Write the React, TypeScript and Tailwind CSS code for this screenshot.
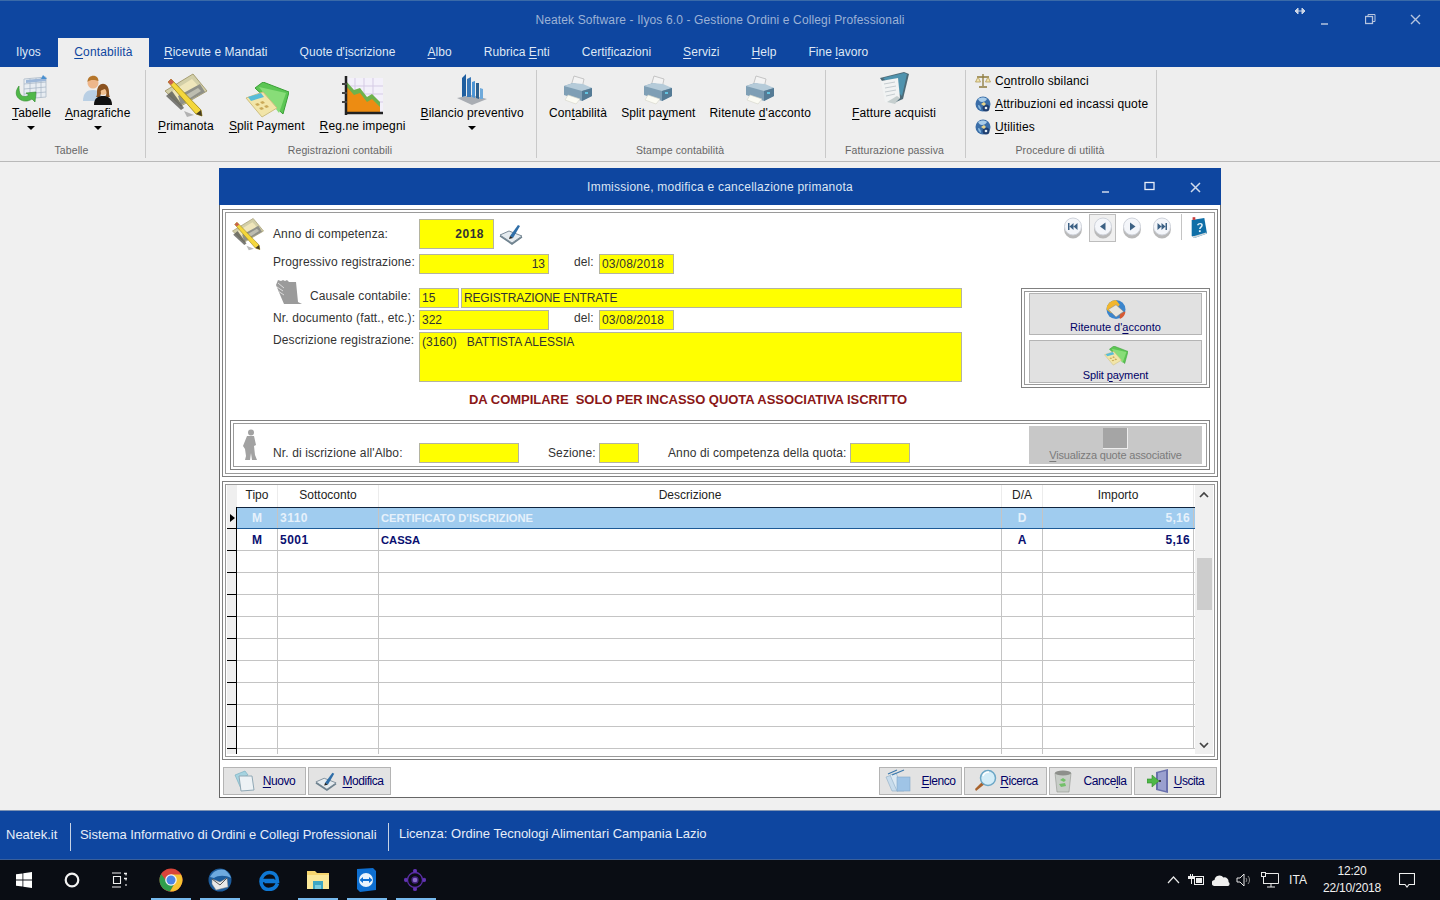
import React from "react";

function L({ t }: { t: string }) {
  const i = t.indexOf("&");
  if (i < 0) return <>{t}</>;
  return (
    <>
      {t.slice(0, i)}
      <u className="underline underline-offset-2">{t[i + 1]}</u>
      {t.slice(i + 2)}
    </>
  );
}

const IconTabelle = () => (
  <svg width="34" height="30" viewBox="0 0 34 30">
    <path d="M10 4l22 -2v20l-22 2z" fill="#e8edf2" stroke="#b9c4d0" />
    <path d="M10 9l22-2M10 14l22-2M10 19l22-2M16 3.500v20M22 3v20M27 2.500v20" stroke="#a9b8c8" strokeWidth="0.8" />
    <path d="M12 5l20-2v3l-20 2z" fill="#9db7d8" />
    <path d="M29 0l4 4h-6z" fill="#4a90d0" />
    <path d="M5 11c-4 5-4 11 2 14 4 2 8 1 11-1l3 3 1-10-10 1 3 2c-3 2-6 2-8 0-2-2-2-6-2-9z" fill="#4fb848" stroke="#2f8a2c" strokeWidth="0.6" />
  </svg>
);
const IconAnagrafiche = () => (
  <svg width="30" height="30" viewBox="0 0 30 30">
    <circle cx="10" cy="8" r="5.500" fill="#eeb68a" />
    <path d="M4.500 7c0-8 11-8 11-1-3-1-8-2-11 1z" fill="#b5762b" />
    <path d="M0 26c0-8 4-11 10-11s9 3 9 11z" fill="#b9cfe4" />
    <circle cx="20" cy="15" r="5" fill="#f0c090" />
    <path d="M14 17c0-11 12-11 12 0 0 4 1 5 1 5h-5c2-3 2-6 0-8-3 1-5 1-4 4l-1 4h-4c1-1 1-3 1-5z" fill="#8a5220" />
    <path d="M11 30c0-7 4-9 9-9s9 2 9 9z" fill="#111111" />
  </svg>
);
const PrimanotaArt = () => (
  <>
    <path d="M3 19L31 2l14 17-26 15z" fill="#d3cfa8" stroke="#a79f75" />
    <path d="M9 20L30 7l11 12-21 12z" fill="#efe6bb" />
    <path d="M16 24l22-12 5 8-24 13z" fill="#8f9088" />
    <path d="M22 24l14-8 3 3-14 9z" fill="#bdbdb0" />
    <path d="M4 24l15 14 3-2-12-17z" fill="#5d5d58" opacity="0.8" />
    <path d="M6 10l3-3 30 31 1 6-6-2z" fill="#f4d73c" stroke="#9b8417" strokeWidth="0.8" />
    <path d="M6 10l3-3 3 3-3 3z" fill="#c9604f" />
    <path d="M34 42l6 2-1-6z" fill="#473d22" />
    <path d="M22 39l10 4-7 2z" fill="#888888" opacity="0.6" />
  </>
);
const IconPrimanota = () => (
  <svg width="48" height="46" viewBox="0 0 48 46"><PrimanotaArt /></svg>
);
const IconPrimanota2 = () => (
  <svg width="36" height="34" viewBox="0 0 48 46" className="shrink-0"><PrimanotaArt /></svg>
);
const IconSplit = ({ s = 44 }: { s?: number }) => (
  <svg width={s} height={(s * 36) / 44} viewBox="0 0 44 36">
    <path d="M10 6l8-6 26 10-6 22z" fill="#5cc654" stroke="#3a9f35" />
    <path d="M14 5l27 6-7 20z" fill="#88dd78" />
    <path d="M1 16l17-6 14 16-15 9z" fill="#f2e5a8" stroke="#cdbf80" />
    <path d="M3 15l13-4 3 4-13 4z" fill="#58bcd8" />
    <path d="M10 22l3-1 2 2-3 1zM15 20l3-1 2 2-3 1zM14 26l3-1 2 2-3 1zM19 24l3-1 2 2-3 1z" fill="#c9a958" />
  </svg>
);
const IconImpegni = () => (
  <svg width="44" height="42" viewBox="0 0 44 42">
    <rect x="5" y="2" width="37" height="34" fill="#f3f0fa" />
    <path d="M5 10h37M5 18h37M5 26h37M14 2v34M23 2v34M32 2v34" stroke="#d5cbe5" />
    <path d="M5 8l8 9 6-2 7 9 5-3 8 8v7H5z" fill="#ed8c12" />
    <path d="M5 5l8 9 6-2 7 9 5-3 8 8v5l-8-8-5 3-7-9-6 2-8-9z" fill="#6eb24c" />
    <path d="M5 0v39M5 37h37" stroke="#222222" strokeWidth="2.500" />
    <path d="M1 8h5M1 17h5M1 26h5" stroke="#444444" strokeWidth="2" />
  </svg>
);
const IconBilancio = () => (
  <svg width="30" height="32" viewBox="0 0 30 32">
    <path d="M0 25l15-3 15 4-15 6z" fill="#a9adb3" />
    <path d="M5 5l4-4v22l-4 1z" fill="#1f5e9f" />
    <path d="M10 6l4-2v20h-4z" fill="#3878b8" />
    <path d="M15 9l3-1v17l-3-1z" fill="#4c94d4" />
    <path d="M19 10l3 0v16l-3-1z" fill="#2b5f8e" />
    <path d="M23 15l3 1v10l-3 0z" fill="#6faadb" />
  </svg>
);
const IconPrinter = () => (
  <svg width="30" height="30" viewBox="0 0 30 30">
    <path d="M11 1l10 3-2 9-11-2z" fill="#f3f3f3" stroke="#c4c4c4" />
    <path d="M1 11l9-3 19 5v8l-10 5-18-6z" fill="#7f9fb5" />
    <path d="M1 11l18 5 10-3-9-4-10-1z" fill="#b5cbd9" />
    <path d="M19 16v10l10-5v-8z" fill="#557b95" />
    <path d="M5 20l12 4-4 5-11-4z" fill="#fbfbf3" stroke="#d4d4c8" strokeWidth="0.6" />
    <rect x="22" y="17" width="3" height="2" fill="#63c3e0" />
  </svg>
);
const IconFatture = () => (
  <svg width="34" height="34" viewBox="0 0 34 34">
    <path d="M3 7l24-6 5 2-6 25-7 3z" fill="#4d6a77" />
    <path d="M6 7l21-5 3 1-5 22z" fill="#4f93ae" />
    <path d="M4 10l17-3 2 20-6 6-9-2z" fill="#f1f3f3" />
    <path d="M7 13l11-2M8 17l11-2M8 21l11-2M9 25l9-2" stroke="#c5ccd0" />
    <path d="M20 25l3 2-5 6-8-2z" fill="#99aaaa" opacity="0.5" />
  </svg>
);
const IconScales = () => (
  <svg width="16" height="16" viewBox="0 0 16 16">
    <path d="M8 1v12M4 14h8M2 4h12" stroke="#8d7a3c" strokeWidth="1.300" />
    <path d="M0.500 9L3 4l2.500 5zM10.500 9L13 4l2.500 5z" fill="#f2e4ae" stroke="#a9924a" strokeWidth="0.7" />
  </svg>
);
const IconDisc = () => (
  <svg width="16" height="16" viewBox="0 0 16 16">
    <circle cx="8" cy="8" r="7.500" fill="#3b6ea8" />
    <path d="M3 3c3-2 7-2 9 0-1 2-3 3-5 3S4 5 3 3z" fill="#a9cdea" />
    <path d="M3 9c2 0 3 2 3 5-2-1-3-3-3-5z" fill="#88b8dd" />
    <circle cx="11" cy="12" r="3.500" fill="#1f3f70" />
    <circle cx="11" cy="12" r="1.300" fill="#e5eef5" />
    <path d="M6 8l3-2 2 2-2 2z" fill="#e8d48a" />
  </svg>
);
const IconCheck = ({ s = 24 }: { s?: number }) => (
  <svg width={s} height={s} viewBox="0 0 24 24">
    <path d="M1 13l9-4 13 5-10 7z" fill="#e5ebef" stroke="#7d8d99" />
    <path d="M1 14l12 8 10-7" fill="none" stroke="#6b7f8c" strokeWidth="1.500" />
    <path d="M11 14l8-11 2 1-7 12z" fill="#2f6ea8" />
    <path d="M11 14l-1 3 4-1z" fill="#222222" />
  </svg>
);
const IconCausale = () => (
  <svg width="28" height="26" viewBox="0 0 28 26" fill="#9b9b9b">
    <path d="M3 1l3 1 2-1 2 1 2-1 2 2h7l2 20 4 2H9l-3-7-5-12z" />
    <path d="M3 4l6 5M2 8l6 4M3 12l6 4" stroke="#dcdcdc" strokeWidth="1" />
  </svg>
);
const IconPerson = () => (
  <svg width="14" height="32" viewBox="0 0 14 32" fill="#a2a2a2">
    <circle cx="8" cy="3.500" r="3" />
    <path d="M4 7h7l2 9-2 1 1 9 2 5H9l-1-7-1 7H2l1-4-1-7-2-3z" />
  </svg>
);
const IconRit = () => (
  <svg width="24" height="20" viewBox="0 0 24 20">
    <circle cx="12" cy="10" r="10" fill="#3b85cc" />
    <path d="M12 0a10 10 0 0 0-10 10l5 4 9-9z" fill="#f2b62c" />
    <path d="M16 20a10 10 0 0 0 6-8l-6 2z" fill="#d65a33" />
    <path d="M4 10l8-5 8 7-8 6z" fill="#e8e6dd" stroke="#888888" strokeWidth="0.6" />
  </svg>
);
const IconNuovo = () => (
  <svg width="22" height="22" viewBox="0 0 22 22">
    <path d="M1 5l10-4 3 4-8 4 2 12z" fill="#a5d3e0" stroke="#7bb2c3" strokeWidth="0.7" />
    <path d="M5 6h13l2 14-13 1z" fill="#edf2f5" stroke="#90a8b5" />
  </svg>
);
const IconElenco = () => (
  <svg width="28" height="24" viewBox="0 0 28 24">
    <path d="M1 8l6-2 6 16H7z" fill="#c8dcec" stroke="#8eadc4" strokeWidth="0.6" />
    <path d="M5 6l6-2 8 18h-7z" fill="#dce9f3" stroke="#8eadc4" strokeWidth="0.6" />
    <rect x="12" y="8" width="13" height="14" fill="#9fc4e6" stroke="#83a9c9" strokeWidth="0.6" />
    <path d="M3 5l9-4M7 6l12-5" stroke="#3b79ad" strokeWidth="1.200" />
  </svg>
);
const IconLente = () => (
  <svg width="24" height="24" viewBox="0 0 24 24">
    <path d="M3 22l-1-2 8-8 3 2z" fill="#a8622c" />
    <circle cx="15" cy="9" r="7.500" fill="#d4edf8" stroke="#6ca7c6" strokeWidth="1.500" />
    <path d="M10 7c1-3 4-4 6-4" stroke="#ffffff" strokeWidth="1.500" fill="none" />
  </svg>
);
const IconBin = () => (
  <svg width="18" height="24" viewBox="0 0 18 24">
    <path d="M1 4h16l-2 19H3z" fill="#c8cdc8" stroke="#90948f" strokeWidth="0.6" />
    <ellipse cx="9" cy="4" rx="8" ry="2.500" fill="#8d8f8b" />
    <path d="M6 11l3-2 3 2-2 2zM5 15l2 3 5-1-1-3z" fill="#73c06a" />
  </svg>
);
const IconUscita = () => (
  <svg width="24" height="24" viewBox="0 0 24 24">
    <path d="M9 3l12-3v24l-12-3z" fill="#6970ad" />
    <path d="M11 4l8-2v20l-8-2z" fill="#9aa0cf" />
    <circle cx="13" cy="12" r="1" fill="#222222" />
    <path d="M0 10h5V6l7 6-7 6v-4H0z" fill="#4fb848" stroke="#2f8a2c" strokeWidth="0.6" />
  </svg>
);
const NavBtn = ({ d }: { d: string }) => (
  <svg width="20" height="22" viewBox="0 0 20 22">
    <ellipse cx="10" cy="12" rx="9" ry="9.500" fill="#b9b9b9" />
    <circle cx="10" cy="9.500" r="8.500" fill="#f4f6fa" stroke="#d0d4dc" />
    <path d={d} fill="#3c6184" />
  </svg>
);
const IconHelp = () => (
  <svg className="mt-[3px]" width="18" height="22" viewBox="0 0 20 24">
    <path d="M3 3l14-2 3 17-14 5-3-2z" fill="#0f6fa8" />
    <path d="M3 21l3 2 14-5-1-1-13 4z" fill="#cfd8dc" />
    <rect x="4" y="0" width="3" height="3" fill="#c93b3b" />
    <path d="M9.500 9c1-2.500 5-2.500 5 0 0 2-2.500 2-2.500 4" stroke="#e8f4fb" strokeWidth="1.600" fill="none" />
    <rect x="11" y="14.500" width="2" height="2" fill="#e8f4fb" />
  </svg>
);

function Arrow() {
  return <span className="mt-[5px] w-0 h-0 border-l-[4px] border-r-[4px] border-t-[4px] border-l-transparent border-r-transparent border-t-black" />;
}

function RibbonItem({ icon, label, tall, arrow }: { icon: React.ReactNode; label: string; tall?: boolean; arrow?: boolean }) {
  return (
    <div className="flex flex-col items-center">
      <div className={`flex items-end justify-center ${tall ? "h-[48px]" : "h-[35px]"}`}>{icon}</div>
      <div className="h-[16px] leading-[16px] whitespace-nowrap text-[12px] tracking-[0.13px] text-black"><L t={label} /></div>
      {arrow && <Arrow />}
    </div>
  );
}

function Group({ title, w, children, pl, gap }: { title: string; w: string; children: React.ReactNode; pl: string; gap: string }) {
  return (
    <div className={`flex flex-col h-[88px] border-r border-[#c9c9c9] ${w}`}>
      <div className={`flex-1 flex ${pl} ${gap}`}>{children}</div>
      <div className="h-[15px] pr-[2px] text-center text-[10.500px] tracking-[0.1px] leading-[14px] text-[#666666]">{title}</div>
    </div>
  );
}

function Field({ children, w, h = "h-[20px]", cls = "" }: { children?: React.ReactNode; w: string; h?: string; cls?: string }) {
  return (
    <div className={`${w} ${h} bg-[#ffff00] border border-[#b4b4a0] px-[2px] text-[12px] leading-[19px] text-[#333333] whitespace-pre shrink-0 ${cls}`}>{children}</div>
  );
}

function Label({ children, w = "w-[146px]", cls = "" }: { children: React.ReactNode; w?: string; cls?: string }) {
  return <div className={`${w} text-[12px] tracking-[0.12px] leading-[14px] text-[#333333] whitespace-nowrap shrink-0 ${cls}`}>{children}</div>;
}

function GrayBtn({ icon, label, w = "w-[83px]", gap = "gap-[8px]" }: { icon: React.ReactNode; label: string; w?: string; gap?: string }) {
  return (
    <div className={`${w} h-[28px] bg-[#e3e3e3] border border-[#b4b4b4] flex items-center justify-center ${gap} text-[12px] tracking-[-0.45px] text-[#000066]`}>
      {icon}
      <span className="whitespace-nowrap"><L t={label} /></span>
    </div>
  );
}

function Cell({ w, cls = "", children }: { w: string; cls?: string; children?: React.ReactNode }) {
  return <div className={`${w} h-full shrink-0 border-r border-[#c4c4c4] px-[2px] truncate ${cls}`}>{children}</div>;
}

const menus = ["Ilyos", "&Contabilità", "&Ricevute e Mandati", "Quote d'&iscrizione", "&Albo", "Rubrica &Enti", "Certi&ficazioni", "&Servizi", "&Help", "Fine &lavoro"];

const rows: { tipo: string; conto: string; desc: string; da: string; imp: string }[] = [
  { tipo: "M", conto: "3110", desc: "CERTIFICATO D'ISCRIZIONE", da: "D", imp: "5,16" },
  { tipo: "M", conto: "5001", desc: "CASSA", da: "A", imp: "5,16" },
  ...Array.from({ length: 9 }, () => ({ tipo: "", conto: "", desc: "", da: "", imp: "" })),
];

export default function App() {
  return (
    <div className="w-[1440px] h-[900px] overflow-hidden flex flex-col bg-[#f0f0f0] font-['Liberation_Sans',Arial,sans-serif]">
      {/* Title bar */}
      <div className="h-[38px] shrink-0 bg-[#0e46a0] border-t border-[#3a6aa8] flex items-center relative">
        <div className="w-full text-center text-[12px] tracking-[0.13px] text-[#9cb2d6]">Neatek Software - Ilyos 6.0 - Gestione Ordini e Collegi Professionali</div>
        <div className="absolute right-0 top-0 h-full flex text-[#a9bbd8]">
          <svg className="absolute right-[134px] top-[6px]" width="12" height="8" viewBox="0 0 12 8"><path d="M1 4h10M1 4l3-3v6zM11 4L8 1v6z" fill="#cbd5e6" stroke="#cbd5e6" /></svg>
          <svg className="absolute right-[110px] top-[15px]" width="10" height="10" viewBox="0 0 10 10"><path d="M1 8h7" stroke="#b5c4de" strokeWidth="1.500" /></svg>
          <svg className="absolute right-[64px] top-[13px]" width="11" height="11" viewBox="0 0 11 11" fill="none" stroke="#b5c4de"><rect x="0.500" y="2.500" width="7" height="7" strokeWidth="1.300" /><path d="M3 2.500v-2h7v7H8" /></svg>
          <svg className="absolute right-[19px] top-[13px]" width="11" height="11" viewBox="0 0 11 11"><path d="M1 1l9 9M10 1l-9 9" stroke="#b5c4de" strokeWidth="1.400" /></svg>
        </div>
      </div>
      {/* Menu */}
      <div className="h-[29px] shrink-0 bg-[#0e46a0] flex text-[12px] tracking-[0.05px] text-[#dfe8f5]">
        {menus.map((m, i) =>
          i === 1 ? (
            <div key={m} className="h-full w-[91px] ml-[1px] -mr-[1px] text-center bg-[#eeeeee] text-[#0e46a0] leading-[28px] tracking-[0.15px]"><L t={m} /></div>
          ) : (
            <div key={m} className="h-full px-[16px] leading-[28px] whitespace-nowrap"><L t={m} /></div>
          )
        )}
      </div>
      {/* Ribbon */}
      <div className="h-[95px] shrink-0 bg-[#eeeeee] border-b border-[#b9b9b9] flex pt-[3px] items-start">
        <Group title="Tabelle" w="w-[146px]" pl="pl-[12px]" gap="gap-[14px]">
          <RibbonItem icon={<IconTabelle />} label="&Tabelle" arrow />
          <RibbonItem icon={<IconAnagrafiche />} label="&Anagrafiche" arrow />
        </Group>
        <Group title="Registrazioni contabili" w="w-[391px]" pl="pl-[12px]" gap="gap-[15px]">
          <RibbonItem tall icon={<IconPrimanota />} label="&Primanota" />
          <RibbonItem tall icon={<IconSplit />} label="&Split Payment" />
          <RibbonItem tall icon={<IconImpegni />} label="&Reg.ne impegni" />
          <RibbonItem icon={<IconBilancio />} label="&Bilancio preventivo" arrow />
        </Group>
        <Group title="Stampe contabilità" w="w-[289px]" pl="pl-[12px]" gap="gap-[14px]">
          <RibbonItem icon={<IconPrinter />} label="Con&tabilità" />
          <RibbonItem icon={<IconPrinter />} label="Split pa&yment" />
          <RibbonItem icon={<IconPrinter />} label="Ritenute &d'acconto" />
        </Group>
        <Group title="Fatturazione passiva" w="w-[140px]" pl="pl-[26px]" gap="gap-[0px]">
          <RibbonItem icon={<IconFatture />} label="&Fatture acquisti" />
        </Group>
        <Group title="Procedure di utilità" w="w-[191px]" pl="pl-[9px]" gap="gap-[0px]">
          <div className="flex flex-col gap-[7px] pt-[3px] text-[12px] tracking-[0.13px] text-black">
            <div className="h-[16px] flex items-center gap-[4px] whitespace-nowrap"><IconScales /><span><L t="C&ontrollo sbilanci" /></span></div>
            <div className="h-[16px] flex items-center gap-[4px] whitespace-nowrap"><IconDisc /><span><L t="&Attribuzioni ed incassi quote" /></span></div>
            <div className="h-[16px] flex items-center gap-[4px] whitespace-nowrap"><IconDisc /><span><L t="&Utilities" /></span></div>
          </div>
        </Group>
      </div>

      {/* Main */}
      <div className="flex-1 flex justify-center pt-[6px] bg-[#f0f0f0]">
        <div className="w-[1002px] h-[630px] bg-white border border-[#666666] border-t-0 flex flex-col">
          <div className="h-[37px] shrink-0 -mx-[1px] pt-px bg-[#0e46a0] relative flex items-center justify-center text-[12px] tracking-[0.24px] text-[#dbe5f4]">
            Immissione, modifica e cancellazione primanota
            <svg className="absolute right-[110px] top-[14px]" width="10" height="12" viewBox="0 0 10 12"><path d="M1 10h7" stroke="#cfdaeb" strokeWidth="1.500" /></svg>
            <svg className="absolute right-[66px] top-[13px]" width="11" height="10" viewBox="0 0 11 10"><rect x="1" y="1.500" width="9" height="7" fill="none" stroke="#e8eef8" strokeWidth="1.300" /></svg>
            <svg className="absolute right-[20px] top-[14px]" width="11" height="11" viewBox="0 0 11 11"><path d="M1 1l9 9M10 1l-9 9" stroke="#cfdaeb" strokeWidth="1.500" /></svg>
          </div>
          {/* upper group */}
          <div className="mx-[2px] mt-[4px] h-[268px] border border-[#808080] p-[2px] shrink-0">
            <div className="h-full border border-[#9a9a9a] flex flex-col">
              <div className="h-[207px] shrink-0 flex">
                <div className="w-[790px] shrink-0 flex flex-col">
                  {/* row 1 */}
                  <div className="flex items-center h-[30px] mt-[6px]">
                    <div className="w-[47px] pl-[4px] shrink-0 flex"><IconPrimanota2 /></div>
                    <Label>Anno di competenza:</Label>
                    <Field w="w-[75px]" h="h-[30px]" cls="text-right font-bold leading-[29px] pr-[9px] text-[#222222] tracking-[0.5px]">2018</Field>
                    <div className="ml-[5px]"><IconCheck /></div>
                  </div>
                  {/* row 2 */}
                  <div className="flex h-[20px] mt-[5px]">
                    <div className="w-[47px] shrink-0" />
                    <Label cls="pt-px">Progressivo registrazione:</Label>
                    <Field w="w-[130px]" cls="text-right pr-[3px]">13</Field>
                    <Label w="w-[50px]" cls="pl-[25px] pt-px">del:</Label>
                    <Field w="w-[75px]" cls="tracking-[0.2px]">03/08/2018</Field>
                  </div>
                  {/* row 3 */}
                  <div className="flex h-[20px] mt-[14px] relative">
                    <div className="absolute left-[49px] -top-[9px]"><IconCausale /></div>
                    <div className="w-[84px] shrink-0" />
                    <Label w="w-[109px]" cls="pt-px">Causale contabile:</Label>
                    <Field w="w-[40px]">15</Field>
                    <Field w="w-[501px]" cls="ml-[2px] tracking-[-0.15px]">REGISTRAZIONE ENTRATE</Field>
                  </div>
                  {/* row 4 */}
                  <div className="flex h-[20px] mt-[2px]">
                    <div className="w-[47px] shrink-0" />
                    <Label cls="pt-px">Nr. documento (fatt., etc.):</Label>
                    <Field w="w-[130px]">322</Field>
                    <Label w="w-[50px]" cls="pl-[25px] pt-px">del:</Label>
                    <Field w="w-[75px]" cls="tracking-[0.2px]">03/08/2018</Field>
                  </div>
                  {/* row 5 */}
                  <div className="flex h-[50px] mt-[2px]">
                    <div className="w-[47px] shrink-0" />
                    <Label cls="pt-[1px]">Descrizione registrazione:</Label>
                    <Field w="w-[543px]" h="h-[50px]" cls="leading-[16px]">{"(3160)   BATTISTA ALESSIA"}</Field>
                  </div>
                  <div className="mt-[10px] pl-[243px] h-[16px] text-[13px] leading-[16px] font-bold text-[#8a1717] whitespace-pre tracking-[-0.03px]">{"DA COMPILARE  SOLO PER INCASSO QUOTA ASSOCIATIVA ISCRITTO"}</div>
                </div>
                <div className="flex-1 flex flex-col items-start">
                  <div className="flex items-start h-[30px] mt-[1px] pl-[43px] text-[#666666]">
                    <div className="w-[28px] h-[28px] flex items-center justify-center mr-[2px]"><NavBtn d="M5 6h1.500v7H5zM6.500 9.500L10.500 6v7zM10.500 9.500L14.500 6v7z" /></div>
                    <div className="w-[27px] h-[28px] bg-[#f0f0f0] border border-[#bdbdbd] flex items-center justify-center"><NavBtn d="M12.500 5.500v8l-5.500-4z" /></div>
                    <div className="w-[32px] h-[28px] flex items-center justify-center"><NavBtn d="M8 5.500v8l5.500-4z" /></div>
                    <div className="w-[28px] h-[28px] flex items-center justify-center"><NavBtn d="M5.500 6v7l4-3.500zM9.500 6v7l4-3.500zM13.500 6H15v7h-1.500z" /></div>
                    <div className="w-px h-[26px] bg-[#c4c4c4] ml-[5px] mr-[7px]" />
                    <IconHelp />
                  </div>
                  <div className="ml-[5px] mt-[44px] w-[189px] h-[100px] border border-[#808080] p-[2px]">
                    <div className="h-full border border-[#9a9a9a] flex flex-col items-center gap-[5px] pt-[1px]">
                      <div className="w-[173px] h-[42px] bg-[#e1e1e1] border border-[#b4b4b4] flex flex-col items-center text-[11px] leading-[14px] text-[#000066] pt-[6px]">
                        <IconRit />
                        <span className="mt-[1px]"><L t="Ritenute d'&acconto" /></span>
                      </div>
                      <div className="w-[173px] h-[43px] bg-[#e1e1e1] border border-[#b4b4b4] flex flex-col items-center text-[11px] tracking-[-0.1px] leading-[14px] text-[#000066] pt-[5px]">
                        <IconSplit s={24} />
                        <span className="mt-[2px]"><L t="Split &payment" /></span>
                      </div>
                    </div>
                  </div>
                </div>
              </div>
              {/* inner group */}
              <div className="mx-[4px] h-[50px] border border-[#808080] p-[2px]">
                <div className="h-full border border-[#9a9a9a] flex items-end relative">
                  <div className="w-[39px] pl-[9px] shrink-0 self-start pt-[5px]"><IconPerson /></div>
                  <Label w="w-[146px]" cls="mb-[6px]">{"Nr. di iscrizione all'Albo:"}</Label>
                  <Field w="w-[100px]" cls="mb-[3px]" />
                  <Label w="w-[80px]" cls="mb-[6px] pl-[29px]">Sezione:</Label>
                  <Field w="w-[40px]" cls="mb-[3px]" />
                  <Label w="w-[211px]" cls="mb-[6px] pl-[29px]">Anno di competenza della quota:</Label>
                  <Field w="w-[60px]" cls="mb-[3px]" />
                  <div className="ml-[119px] w-[173px] h-[38px] mb-[2px] bg-[#c8c8c8] flex flex-col items-center text-[11px] tracking-[-0.18px] leading-[14px] text-[#7b7b7b]">
                    <div className="w-[25px] h-[21px] mt-[2px] bg-[#a5a5a5] border-r border-b border-[#eeeeee]" />
                    <span className="-mt-[1px]"><L t="&Visualizza quote associative" /></span>
                  </div>
                </div>
              </div>
            </div>
          </div>
          {/* grid group */}
          <div className="mx-[2px] mt-[4px] h-[279px] border border-[#808080] p-[2px] shrink-0">
            <div className="h-full border border-[#9a9a9a] pl-[1px] pr-[1px] flex">
              <div className="flex-1 min-w-0 flex flex-col h-[269px] overflow-hidden text-[12px]">
                <div className="h-[22px] shrink-0 flex text-[#222222] leading-[21px] bg-white">
                  <div className="w-[10px] h-full shrink-0 bg-[#efefef]" />
                  <Cell w="w-[41px]" cls="text-center border-[#ececec]">Tipo</Cell>
                  <Cell w="w-[101px]" cls="text-center border-[#ececec]">Sottoconto</Cell>
                  <Cell w="w-[623px]" cls="text-center border-[#ececec]">Descrizione</Cell>
                  <Cell w="w-[41px]" cls="text-center border-[#ececec]">D/A</Cell>
                  <Cell w="w-[151px]" cls="text-center border-[#ececec]">Importo</Cell>
                </div>
                {rows.map((r, i) => (
                  <div key={i} className={`h-[22px] shrink-0 flex font-bold ${i === 0 ? "text-[#e6f1fb]" : "text-[#0a1070] leading-[22px]"}`}>
                    <div className="w-[10px] h-full shrink-0 bg-[#efefef] border-b border-r border-black flex items-center">
                      {i === 0 && <span className="ml-[3px] w-0 h-0 border-t-[4px] border-b-[4px] border-l-[5px] border-t-transparent border-b-transparent border-l-black" />}
                    </div>
                    <div className={`flex flex-1 min-w-0 border-b ${i === 0 ? "bg-[#a0ccef] border-[#1d5a96] border-t border-t-[#10243e] leading-[20px]" : "border-[#c4c4c4]"}`}>
                      <Cell w="w-[41px]" cls={`text-center ${i === 0 ? "border-[#bcdcf5]" : ""}`}>{r.tipo}</Cell>
                      <Cell w="w-[101px]" cls={`tracking-[0.5px] ${i === 0 ? "border-[#bcdcf5]" : ""}`}>{r.conto}</Cell>
                      <Cell w="w-[623px]" cls={`text-[11.200px] ${i === 0 ? "border-[#bcdcf5]" : ""}`}>{r.desc}</Cell>
                      <Cell w="w-[41px]" cls={`text-center ${i === 0 ? "border-[#bcdcf5]" : ""}`}>{r.da}</Cell>
                      <Cell w="w-[151px]" cls={`text-right pr-[3px] tracking-[0.3px] ${i === 0 ? "border-[#bcdcf5]" : ""}`}>{r.imp}</Cell>
                    </div>
                  </div>
                ))}
                <div className="h-[5px] shrink-0 flex">
                  <div className="w-[10px] h-full shrink-0 bg-[#efefef] border-r border-black" />
                  <Cell w="w-[41px]" />
                  <Cell w="w-[101px]" />
                  <Cell w="w-[623px]" />
                  <Cell w="w-[41px]" />
                </div>
              </div>
              <div className="w-[18px] shrink-0 h-[269px] bg-[#f0f0f0] flex flex-col items-center">
                <svg className="mt-[6px]" width="10" height="7" viewBox="0 0 10 7"><path d="M1 6l4-4 4 4" fill="none" stroke="#444444" strokeWidth="1.700" /></svg>
                <div className="w-[15px] h-[52px] mt-[60px] bg-[#cdcdcd]" />
                <svg className="mt-[132px]" width="10" height="7" viewBox="0 0 10 7"><path d="M1 1l4 4 4-4" fill="none" stroke="#444444" strokeWidth="1.700" /></svg>
              </div>
            </div>
          </div>
          {/* bottom buttons */}
          <div className="mt-[7px] mx-[3px] flex justify-between">
            <div className="flex gap-[2px]">
              <GrayBtn w="w-[83px]" icon={<IconNuovo />} label="&Nuovo" gap="gap-[7px]" />
              <GrayBtn icon={<IconCheck s={22} />} label="&Modifica" gap="gap-[5px]" />
            </div>
            <div className="flex gap-[2px]">
              <GrayBtn icon={<IconElenco />} label="&Elenco" />
              <GrayBtn icon={<IconLente />} label="&Ricerca" gap="gap-[3px]" />
              <GrayBtn icon={<IconBin />} label="Cance&lla" gap="gap-[11px]" />
              <GrayBtn icon={<IconUscita />} label="&Uscita" gap="gap-[3px]" />
            </div>
          </div>
        </div>
      </div>

      {/* Status bar */}
      <div className="h-[50px] shrink-0 bg-[#0e46a0] border-t border-[#7e93b3] border-b border-b-[#3a5f9a] flex items-center text-[13px] text-[#e8eef8] whitespace-nowrap">
        <div className="pl-[6px] w-[71px] shrink-0 h-[28px] mt-[4px] leading-[24px] border-r border-[#c6d2e5]">Neatek.it</div>
        <div className="pl-[9px] w-[318px] shrink-0 h-[28px] mt-[4px] leading-[24px] border-r border-[#c6d2e5] tracking-[-0.05px]">Sistema Informativo di Ordini e Collegi Professionali</div>
        <div className="pl-[10px] mb-[3px]">Licenza: Ordine Tecnologi Alimentari Campania Lazio</div>
      </div>

      {/* Taskbar */}
      <div className="h-[40px] shrink-0 bg-[#0a0d14] flex items-center relative text-white">
        <div className="w-[48px] flex justify-center">
          <svg width="16" height="16" viewBox="0 0 16 16" fill="#ffffff"><path d="M0 2.300l6.500-.9v6.200H0zM7.300 1.300L16 0v7.600H7.300zM0 8.400h6.500v6.200L0 13.700zM7.300 8.400H16V16l-8.700-1.200z" /></svg>
        </div>
        <div className="w-[48px] flex justify-center">
          <svg width="16" height="16" viewBox="0 0 16 16"><circle cx="8" cy="8" r="6.300" fill="none" stroke="#f2f2f2" strokeWidth="2.200" /></svg>
        </div>
        <div className="w-[48px] flex justify-center">
          <svg width="18" height="16" viewBox="0 0 18 16" fill="none" stroke="#f0f0f0" strokeWidth="1.100"><path d="M1 1h9M1 15h9M2.500 4.500h7v7h-7zM15 1.500v2M15 6.500v2M15 12v2" /><path d="M13 6.500h3M13 1.500h3" strokeWidth="1.600" /></svg>
        </div>
        <div className="w-[49px] ml-[2px] flex justify-center">
          <svg width="24" height="24" viewBox="0 0 24 24">
            <circle cx="12" cy="12" r="11.500" fill="#d9443a" />
            <path d="M2.200 6A11.500 11.500 0 0 0 11 23.500l5.500-9.500H8z" fill="#2f9e4b" />
            <path d="M22 6.500H12l4.500 7.500L11 23.500A11.500 11.500 0 0 0 22 6.500z" fill="#f6c331" />
            <circle cx="12" cy="12" r="5.800" fill="#f4f4f4" />
            <circle cx="12" cy="12" r="4.500" fill="#4b84e4" />
          </svg>
        </div>
        <div className="w-[49px] flex justify-center">
          <svg width="24" height="24" viewBox="0 0 24 24">
            <circle cx="12" cy="12" r="11.500" fill="#1d5c9c" />
            <path d="M2 9c3-6 9-9 15-7 3 2 5 5 6 8-5-3-13-3-17 0z" fill="#6eaadf" />
            <path d="M4 11l8 3 7-4 1 9-12 3-4-6z" fill="#e8e8e8" stroke="#888888" strokeWidth="0.5" />
            <path d="M4 11l8 6 7-7" fill="none" stroke="#555555" strokeWidth="1" />
          </svg>
        </div>
        <div className="w-[49px] flex justify-center">
          <svg width="22" height="22" viewBox="0 0 22 22">
            <path d="M3 11.500h13.500M19.500 14.500c-2 5-6 6-9 6-4 0-7.500-3-7.500-8 0-5 4-9 8.500-9 5 0 8 3.500 8 9H6.500" fill="none" stroke="#0f78d4" strokeWidth="3.600" />
          </svg>
        </div>
        <div className="w-[49px] flex justify-center">
          <svg width="22" height="20" viewBox="0 0 22 20">
            <path d="M0 1h8l2 2h12v16H0z" fill="#f6d56f" />
            <path d="M0 5h22v14H0z" fill="#fbe89a" />
            <path d="M6 11h10v8h-2v-4H8v4H6z" fill="#3ea6c4" />
            <rect x="8" y="15" width="6" height="4" fill="#79cbe0" />
          </svg>
        </div>
        <div className="w-[47px] flex justify-center">
          <svg width="20" height="24" viewBox="0 0 20 24">
            <path d="M1 1l16-1 3 3v19l-16 2-3-3z" fill="#0e6fd1" />
            <circle cx="10" cy="12" r="7" fill="#e9f3fc" />
            <path d="M3.500 12l3.500-3v2h6V9l3.500 3-3.500 3v-2H7v2z" fill="#0e6fd1" />
          </svg>
        </div>
        <div className="w-[51px] flex justify-center">
          <svg width="22" height="22" viewBox="0 0 22 22" fill="none" stroke="#5a2ea6" strokeWidth="1.300">
            <circle cx="11" cy="11" r="7.500" />
            <circle cx="11" cy="11" r="3" fill="#8c6fc8" stroke="#43217f" />
            <circle cx="11" cy="2" r="1.500" fill="#6b3fc0" />
            <circle cx="11" cy="20" r="1.500" fill="#6b3fc0" />
            <circle cx="2" cy="11" r="1.500" fill="#6b3fc0" />
            <circle cx="20" cy="11" r="1.500" fill="#6b3fc0" />
          </svg>
        </div>
        {/* running indicators */}
        <div className="absolute left-[151px] bottom-0 w-[40px] h-[2px] bg-[#76b9ed]" />
        <div className="absolute left-[200px] bottom-0 w-[40px] h-[2px] bg-[#76b9ed]" />
        <div className="absolute left-[298px] bottom-0 w-[40px] h-[2px] bg-[#76b9ed]" />
        <div className="absolute left-[347px] bottom-0 w-[40px] h-[2px] bg-[#76b9ed]" />
        <div className="absolute left-[396px] bottom-0 w-[40px] h-[2px] bg-[#76b9ed]" />
        {/* tray */}
        <div className="ml-auto flex items-center h-full text-[#f0f0f0]">
          <svg className="mr-[8px]" width="13" height="8" viewBox="0 0 13 8"><path d="M1 7l5.500-6L12 7" fill="none" stroke="#e8e8e8" strokeWidth="1.200" /></svg>
          <svg className="mr-[8px]" width="16" height="12" viewBox="0 0 16 12"><path d="M0 2h2V0h1v2h1V0h1v2h1v3H4v5H3V5H0z" fill="#eeeeee" /><rect x="6.500" y="2.500" width="9" height="8" fill="none" stroke="#eeeeee" /><rect x="8" y="4" width="6" height="5" fill="#eeeeee" /></svg>
          <svg className="mr-[6px]" width="18" height="12" viewBox="0 0 18 12"><path d="M3 12a3 3 0 0 1-.5-6 5 5 0 0 1 9-2.500 4 4 0 0 1 5 4.500 2.200 2.200 0 0 1-.5 4z" fill="#efefef" /></svg>
          <svg className="mr-[9px]" width="16" height="14" viewBox="0 0 16 14" fill="none" stroke="#e5e5e5"><path d="M1 5h3l4-4v12l-4-4H1z" /><path d="M10 5a3 3 0 0 1 0 4M12 3a6 6 0 0 1 0 8" stroke="#8b8b8b" /></svg>
          <svg className="mr-[3px]" width="18" height="16" viewBox="0 0 18 16" fill="none" stroke="#e8e8e8"><path d="M4 1.500h13.500v10h-15M2.500 4v8M10 11.500V15M6 15h8" /><rect x="0.500" y="0.500" width="4" height="4" fill="#0a0d14" /></svg>
          <div className="w-[32px] text-center text-[12px] mr-[9px]">ITA</div>
          <div className="w-[58px] text-center text-[12px] tracking-[-0.2px] leading-[17px] mr-[18px] whitespace-nowrap">
            <div>12:20</div>
            <div>22/10/2018</div>
          </div>
          <svg className="mr-[25px]" width="16" height="15" viewBox="0 0 16 15" fill="none" stroke="#f0f0f0" strokeWidth="1.100"><path d="M.5.500h15v11h-5.500l-2 2.500-2-2.500H.5z" /></svg>
        </div>
      </div>
    </div>
  );
}
